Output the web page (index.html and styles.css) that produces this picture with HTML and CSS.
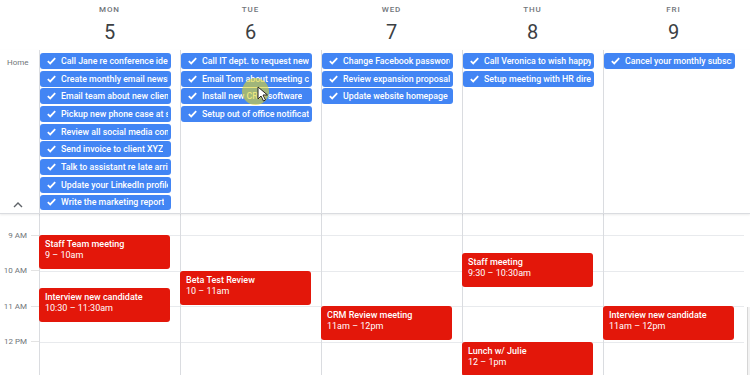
FILE: index.html
```html
<!DOCTYPE html>
<html>
<head>
<meta charset="utf-8">
<link rel="stylesheet" href="styles.css">
</head>
<body>
<div class="cal">
  <div class="head">
    <div class="gutter"></div>
    <div class="day"><span class="dname">MON</span><span class="dnum">5</span></div>
    <div class="day"><span class="dname">TUE</span><span class="dnum">6</span></div>
    <div class="day"><span class="dname">WED</span><span class="dnum">7</span></div>
    <div class="day"><span class="dname">THU</span><span class="dnum">8</span></div>
    <div class="day"><span class="dname">FRI</span><span class="dnum">9</span></div>
  </div>

  <div class="allday">
    <div class="gutter agutter">
      <span class="home">Home</span>
      <svg class="chev" width="10" height="6" viewBox="0 0 10 6"><path d="M1 5 L5 1 L9 5" fill="none" stroke="#5f6368" stroke-width="1.4"/></svg>
    </div>
    <div class="acol">
      <div class="chip"><svg class="ck" viewBox="0 0 9 8"><path d="M0.8 4.2 L3.2 6.4 L8.2 1.2" /></svg><span class="ct">Call Jane re conference ideas</span></div>
      <div class="chip"><svg class="ck" viewBox="0 0 9 8"><path d="M0.8 4.2 L3.2 6.4 L8.2 1.2" /></svg><span class="ct">Create monthly email newsletter</span></div>
      <div class="chip"><svg class="ck" viewBox="0 0 9 8"><path d="M0.8 4.2 L3.2 6.4 L8.2 1.2" /></svg><span class="ct">Email team about new client</span></div>
      <div class="chip"><svg class="ck" viewBox="0 0 9 8"><path d="M0.8 4.2 L3.2 6.4 L8.2 1.2" /></svg><span class="ct">Pickup new phone case at store</span></div>
      <div class="chip"><svg class="ck" viewBox="0 0 9 8"><path d="M0.8 4.2 L3.2 6.4 L8.2 1.2" /></svg><span class="ct">Review all social media comments</span></div>
      <div class="chip"><svg class="ck" viewBox="0 0 9 8"><path d="M0.8 4.2 L3.2 6.4 L8.2 1.2" /></svg><span class="ct">Send invoice to client XYZ</span></div>
      <div class="chip"><svg class="ck" viewBox="0 0 9 8"><path d="M0.8 4.2 L3.2 6.4 L8.2 1.2" /></svg><span class="ct">Talk to assistant re late arrivals</span></div>
      <div class="chip"><svg class="ck" viewBox="0 0 9 8"><path d="M0.8 4.2 L3.2 6.4 L8.2 1.2" /></svg><span class="ct">Update your LinkedIn profile</span></div>
      <div class="chip"><svg class="ck" viewBox="0 0 9 8"><path d="M0.8 4.2 L3.2 6.4 L8.2 1.2" /></svg><span class="ct">Write the marketing report</span></div>
    </div>
    <div class="acol">
      <div class="chip"><svg class="ck" viewBox="0 0 9 8"><path d="M0.8 4.2 L3.2 6.4 L8.2 1.2" /></svg><span class="ct">Call IT dept. to request new laptop</span></div>
      <div class="chip"><svg class="ck" viewBox="0 0 9 8"><path d="M0.8 4.2 L3.2 6.4 L8.2 1.2" /></svg><span class="ct">Email Tom about meeting changes</span></div>
      <div class="chip"><svg class="ck" viewBox="0 0 9 8"><path d="M0.8 4.2 L3.2 6.4 L8.2 1.2" /></svg><span class="ct">Install new CRM software</span></div>
      <div class="chip"><svg class="ck" viewBox="0 0 9 8"><path d="M0.8 4.2 L3.2 6.4 L8.2 1.2" /></svg><span class="ct">Setup out of office notification</span></div>
    </div>
    <div class="acol">
      <div class="chip"><svg class="ck" viewBox="0 0 9 8"><path d="M0.8 4.2 L3.2 6.4 L8.2 1.2" /></svg><span class="ct">Change Facebook password</span></div>
      <div class="chip"><svg class="ck" viewBox="0 0 9 8"><path d="M0.8 4.2 L3.2 6.4 L8.2 1.2" /></svg><span class="ct">Review expansion proposal</span></div>
      <div class="chip"><svg class="ck" viewBox="0 0 9 8"><path d="M0.8 4.2 L3.2 6.4 L8.2 1.2" /></svg><span class="ct">Update website homepage</span></div>
    </div>
    <div class="acol">
      <div class="chip"><svg class="ck" viewBox="0 0 9 8"><path d="M0.8 4.2 L3.2 6.4 L8.2 1.2" /></svg><span class="ct">Call Veronica to wish happy birthday</span></div>
      <div class="chip"><svg class="ck" viewBox="0 0 9 8"><path d="M0.8 4.2 L3.2 6.4 L8.2 1.2" /></svg><span class="ct">Setup meeting with HR director</span></div>
    </div>
    <div class="acol">
      <div class="chip"><svg class="ck" viewBox="0 0 9 8"><path d="M0.8 4.2 L3.2 6.4 L8.2 1.2" /></svg><span class="ct">Cancel your monthly subscription</span></div>
    </div>
  </div>

  <div class="grid">
    <div class="gutter times">
      <div class="trow"><span class="tl">8 AM</span><span class="tick"></span></div>
      <div class="trow"><span class="tl">9 AM</span><span class="tick"></span></div>
      <div class="trow"><span class="tl">10 AM</span><span class="tick"></span></div>
      <div class="trow"><span class="tl">11 AM</span><span class="tick"></span></div>
      <div class="trow"><span class="tl">12 PM</span><span class="tick"></span></div>
      <div class="trow"><span class="tl">1 PM</span><span class="tick"></span></div>
    </div>
    <div class="gcol">
      <div class="lead"></div><div class="slot"></div><div class="slot"></div><div class="slot"></div><div class="slot"></div><div class="slot"></div>
      <div class="ev" style="top:21px;height:34px"><div class="et">Staff Team meeting</div><div class="eh">9 – 10am</div></div>
      <div class="ev" style="top:74.25px;height:34px"><div class="et">Interview new candidate</div><div class="eh">10:30 – 11:30am</div></div>
    </div>
    <div class="gcol">
      <div class="lead"></div><div class="slot"></div><div class="slot"></div><div class="slot"></div><div class="slot"></div><div class="slot"></div>
      <div class="ev" style="top:56.5px;height:34px"><div class="et">Beta Test Review</div><div class="eh">10 – 11am</div></div>
    </div>
    <div class="gcol">
      <div class="lead"></div><div class="slot"></div><div class="slot"></div><div class="slot"></div><div class="slot"></div><div class="slot"></div>
      <div class="ev" style="top:92px;height:34px"><div class="et">CRM Review meeting</div><div class="eh">11am – 12pm</div></div>
    </div>
    <div class="gcol">
      <div class="lead"></div><div class="slot"></div><div class="slot"></div><div class="slot"></div><div class="slot"></div><div class="slot"></div>
      <div class="ev" style="top:38.75px;height:34px"><div class="et">Staff meeting</div><div class="eh">9:30 – 10:30am</div></div>
      <div class="ev" style="top:127.5px;height:34px"><div class="et">Lunch w/ Julie</div><div class="eh">12 – 1pm</div></div>
    </div>
    <div class="gcol">
      <div class="lead"></div><div class="slot"></div><div class="slot"></div><div class="slot"></div><div class="slot"></div><div class="slot"></div>
      <div class="ev" style="top:92px;height:34px"><div class="et">Interview new candidate</div><div class="eh">11am – 12pm</div></div>
    </div>
    <div class="scrollbar"></div>
  </div>

  <div class="cursor">
    <svg width="12" height="16" viewBox="0 0 12 16"><path d="M1 1 L1 13 L4 10 L6.5 15 L8.5 14 L6 9 L10.5 9 Z" fill="#fff" stroke="#222" stroke-width="1"/></svg>
  </div>
</div>
</body>
</html>
```

FILE: styles.css
```css
* { box-sizing: border-box; }
html, body { margin: 0; padding: 0; }
body {
  width: 750px;
  height: 375px;
  overflow: hidden;
  background: #fff;
  font-family: Roboto, "Noto Sans", "Liberation Sans", sans-serif;
}
.cal { position: relative; width: 750px; height: 375px; }

.head, .allday, .grid {
  display: grid;
  grid-template-columns: 39px repeat(5, 141px);
}

.head { height: 50px; padding-top: 4px; }
.day { display: flex; flex-direction: column; align-items: center; }
.dname {
  font-size: 8px;
  line-height: 11px;
  font-weight: 500;
  letter-spacing: 0.9px;
  color: #70757a;
}
.dnum {
  margin-top: 5px;
  font-size: 20px;
  line-height: 24px;
  color: #3c4043;
}

.allday {
  height: 164px;
  border-bottom: 1px solid #dadce0;
  box-shadow: 0 1px 2px rgba(0,0,0,0.08);
  position: relative;
  z-index: 1;
  background: #fff;
}
.agutter {
  display: flex;
  flex-direction: column;
  justify-content: space-between;
  padding: 7px 0 5px 7px;
}
.home { font-size: 8px; line-height: 11px; color: #70757a; }
.chev { margin-left: 6px; }
.acol {
  border-left: 1px solid #dadce0;
  padding-top: 3px;
  display: flex;
  flex-direction: column;
  gap: 1.8px;
}
.chip {
  width: 131px;
  height: 15.9px;
  background: #4285f4;
  border-radius: 3px;
  display: flex;
  align-items: center;
  padding: 0 3px 0 7px;
  gap: 5px;
  overflow: hidden;
  color: #fff;
}
.ck {
  flex: none;
  width: 9px;
  height: 8px;
  fill: none;
  stroke: #fff;
  stroke-width: 1.8;
}
.ct {
  font-size: 8.8px;
  font-weight: 500;
  white-space: nowrap;
  overflow: hidden;
  line-height: 12px;
}

.grid {
  height: 161px;
  overflow: hidden;
  position: relative;
}
.times { margin-top: -32.25px; }
.trow {
  height: 35.5px;
  display: flex;
  align-items: center;
  justify-content: flex-end;
}
.tl {
  font-size: 8px;
  color: #70757a;
  margin-right: 4px;
  white-space: nowrap;
}
.tick { width: 8px; height: 1px; background: #e3e3e3; }
.gcol {
  position: relative;
  border-left: 1px solid #dadce0;
}
.lead { height: 21px; }
.slot { height: 35.5px; border-top: 1px solid #e8eaed; }
.ev {
  position: absolute;
  left: -1px;
  width: 131px;
  background: #e3170a;
  border-radius: 3px;
  color: #fff;
  padding: 4px 6px;
  font-size: 9px;
  line-height: 11px;
  font-weight: 500;
  white-space: nowrap;
  overflow: hidden;
}
.eh { font-weight: 400; }
.scrollbar {
  position: absolute;
  left: 747px;
  top: 93px;
  width: 3px;
  height: 70px;
  border-left: 1px solid #d6d6d6;
  background: #f2f2f2;
}

.cursor {
  position: absolute;
  left: 242px;
  top: 78px;
  width: 27px;
  height: 27px;
  border-radius: 50%;
  background: rgba(224, 214, 40, 0.6);
  z-index: 5;
}
.cursor svg { position: absolute; left: 15px; top: 8px; }
```
